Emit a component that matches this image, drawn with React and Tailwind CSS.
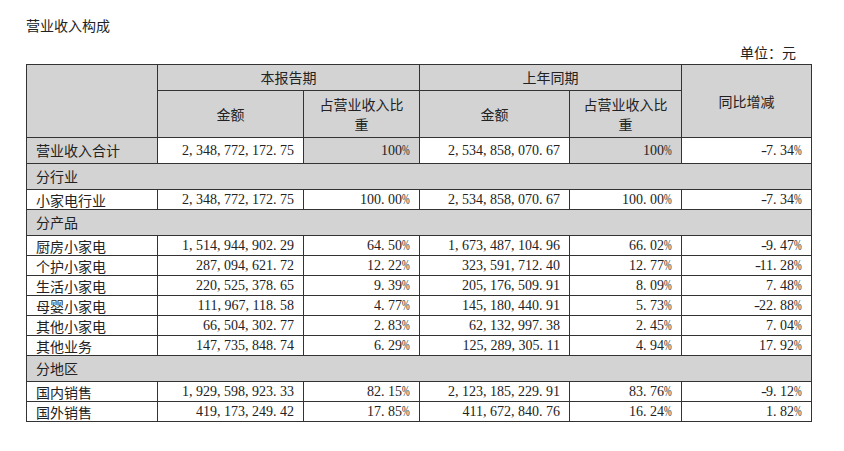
const cjk = { fontFamily: '"Noto Sans CJK SC", "Noto Sans", sans-serif' };
const num = { fontFamily: '"Liberation Serif", "DejaVu Serif", serif' };

const total = {
  name: "营业收入合计",
  cur: "2,348,772,172.75",
  curPct: "100%",
  prev: "2,534,858,070.67",
  prevPct: "100%",
  yoy: "-7.34%",
};

const groups = [
  {
    title: "分行业",
    rows: [["小家电行业", "2,348,772,172.75", "100.00%", "2,534,858,070.67", "100.00%", "-7.34%"]],
  },
  {
    title: "分产品",
    rows: [
      ["厨房小家电", "1,514,944,902.29", "64.50%", "1,673,487,104.96", "66.02%", "-9.47%"],
      ["个护小家电", "287,094,621.72", "12.22%", "323,591,712.40", "12.77%", "-11.28%"],
      ["生活小家电", "220,525,378.65", "9.39%", "205,176,509.91", "8.09%", "7.48%"],
      ["母婴小家电", "111,967,118.58", "4.77%", "145,180,440.91", "5.73%", "-22.88%"],
      ["其他小家电", "66,504,302.77", "2.83%", "62,132,997.38", "2.45%", "7.04%"],
      ["其他业务", "147,735,848.74", "6.29%", "125,289,305.11", "4.94%", "17.92%"],
    ],
  },
  {
    title: "分地区",
    rows: [
      ["国内销售", "1,929,598,923.33", "82.15%", "2,123,185,229.91", "83.76%", "-9.12%"],
      ["国外销售", "419,173,249.42", "17.85%", "411,672,840.76", "16.24%", "1.82%"],
    ],
  },
];

const cell = "border border-[#333] px-[9px] p-0";
const gray = "bg-[#d3d3d3]";

// every char gets a half-width cell, like the SimSun figures in the source
function Figures({ s }) {
  return s.split("").map((ch, i) => {
    if (/\d/.test(ch)) return ch;
    if (ch === "%")
      return (
        <span key={i} className="inline-block w-[8px] whitespace-nowrap">
          <span className="inline-block origin-left scale-x-[0.66]">%</span>
        </span>
      );
    if (ch === "-")
      return (
        <span key={i} className="inline-block w-[7px] whitespace-nowrap">
          <span className="inline-block origin-left scale-x-[1.3]">-</span>
        </span>
      );
    return (
      <span key={i} className="inline-block w-[7px] text-left">
        {ch}
      </span>
    );
  });
}

function NumCell({ children, className = "" }) {
  return (
    <td className={`${cell} text-right text-[14px] whitespace-nowrap ${className}`} style={num}>
      <Figures s={children} />
    </td>
  );
}

export default function App() {
  return (
    <div className="bg-white w-[844px] h-[451px] pl-[26px] pt-[16px] text-[#222] text-[14px]" style={cjk}>
      <div className="h-[18px] leading-[18px]">营业收入构成</div>
      <div className="w-[785px] mt-[9px] h-[18px] leading-[18px] text-right pr-[15px]">单位：元</div>
      <table className="mt-[3px] w-[785px] table-fixed border-collapse">
        <colgroup>
          <col className="w-[131px]" />
          <col className="w-[146px]" />
          <col className="w-[116px]" />
          <col className="w-[150px]" />
          <col className="w-[112px]" />
          <col className="w-[130px]" />
        </colgroup>
        <thead>
          <tr className="h-[26px]">
            <th rowSpan={2} className={`${cell} ${gray}`}></th>
            <th colSpan={2} className={`${cell} ${gray} font-normal text-center`}>本报告期</th>
            <th colSpan={2} className={`${cell} ${gray} font-normal text-center`}>上年同期</th>
            <th rowSpan={2} className={`${cell} ${gray} font-normal text-center`}>同比增减</th>
          </tr>
          <tr className="h-[47px]">
            <th className={`${cell} ${gray} font-normal text-center`}>金额</th>
            <th className={`${cell} ${gray} font-normal text-center leading-[20px]`}>占营业收入比重</th>
            <th className={`${cell} ${gray} font-normal text-center`}>金额</th>
            <th className={`${cell} ${gray} font-normal text-center leading-[20px]`}>占营业收入比重</th>
          </tr>
        </thead>
        <tbody>
          <tr className="h-[26px]">
            <td className={`${cell} ${gray}`}>{total.name}</td>
            <NumCell>{total.cur}</NumCell>
            <NumCell className={gray}>{total.curPct}</NumCell>
            <NumCell>{total.prev}</NumCell>
            <NumCell className={gray}>{total.prevPct}</NumCell>
            <NumCell>{total.yoy}</NumCell>
          </tr>
          {groups.map((g) => (
            <Group key={g.title} group={g} />
          ))}
        </tbody>
      </table>
    </div>
  );
}

function Group({ group }) {
  return (
    <>
      <tr className="h-[26px]">
        <td colSpan={6} className={`${cell} ${gray}`}>{group.title}</td>
      </tr>
      {group.rows.map((r) => (
        <tr key={r[0]} className="h-[20px] leading-[18px]">
          <td className={cell}>{r[0]}</td>
          <NumCell>{r[1]}</NumCell>
          <NumCell>{r[2]}</NumCell>
          <NumCell>{r[3]}</NumCell>
          <NumCell>{r[4]}</NumCell>
          <NumCell>{r[5]}</NumCell>
        </tr>
      ))}
    </>
  );
}
